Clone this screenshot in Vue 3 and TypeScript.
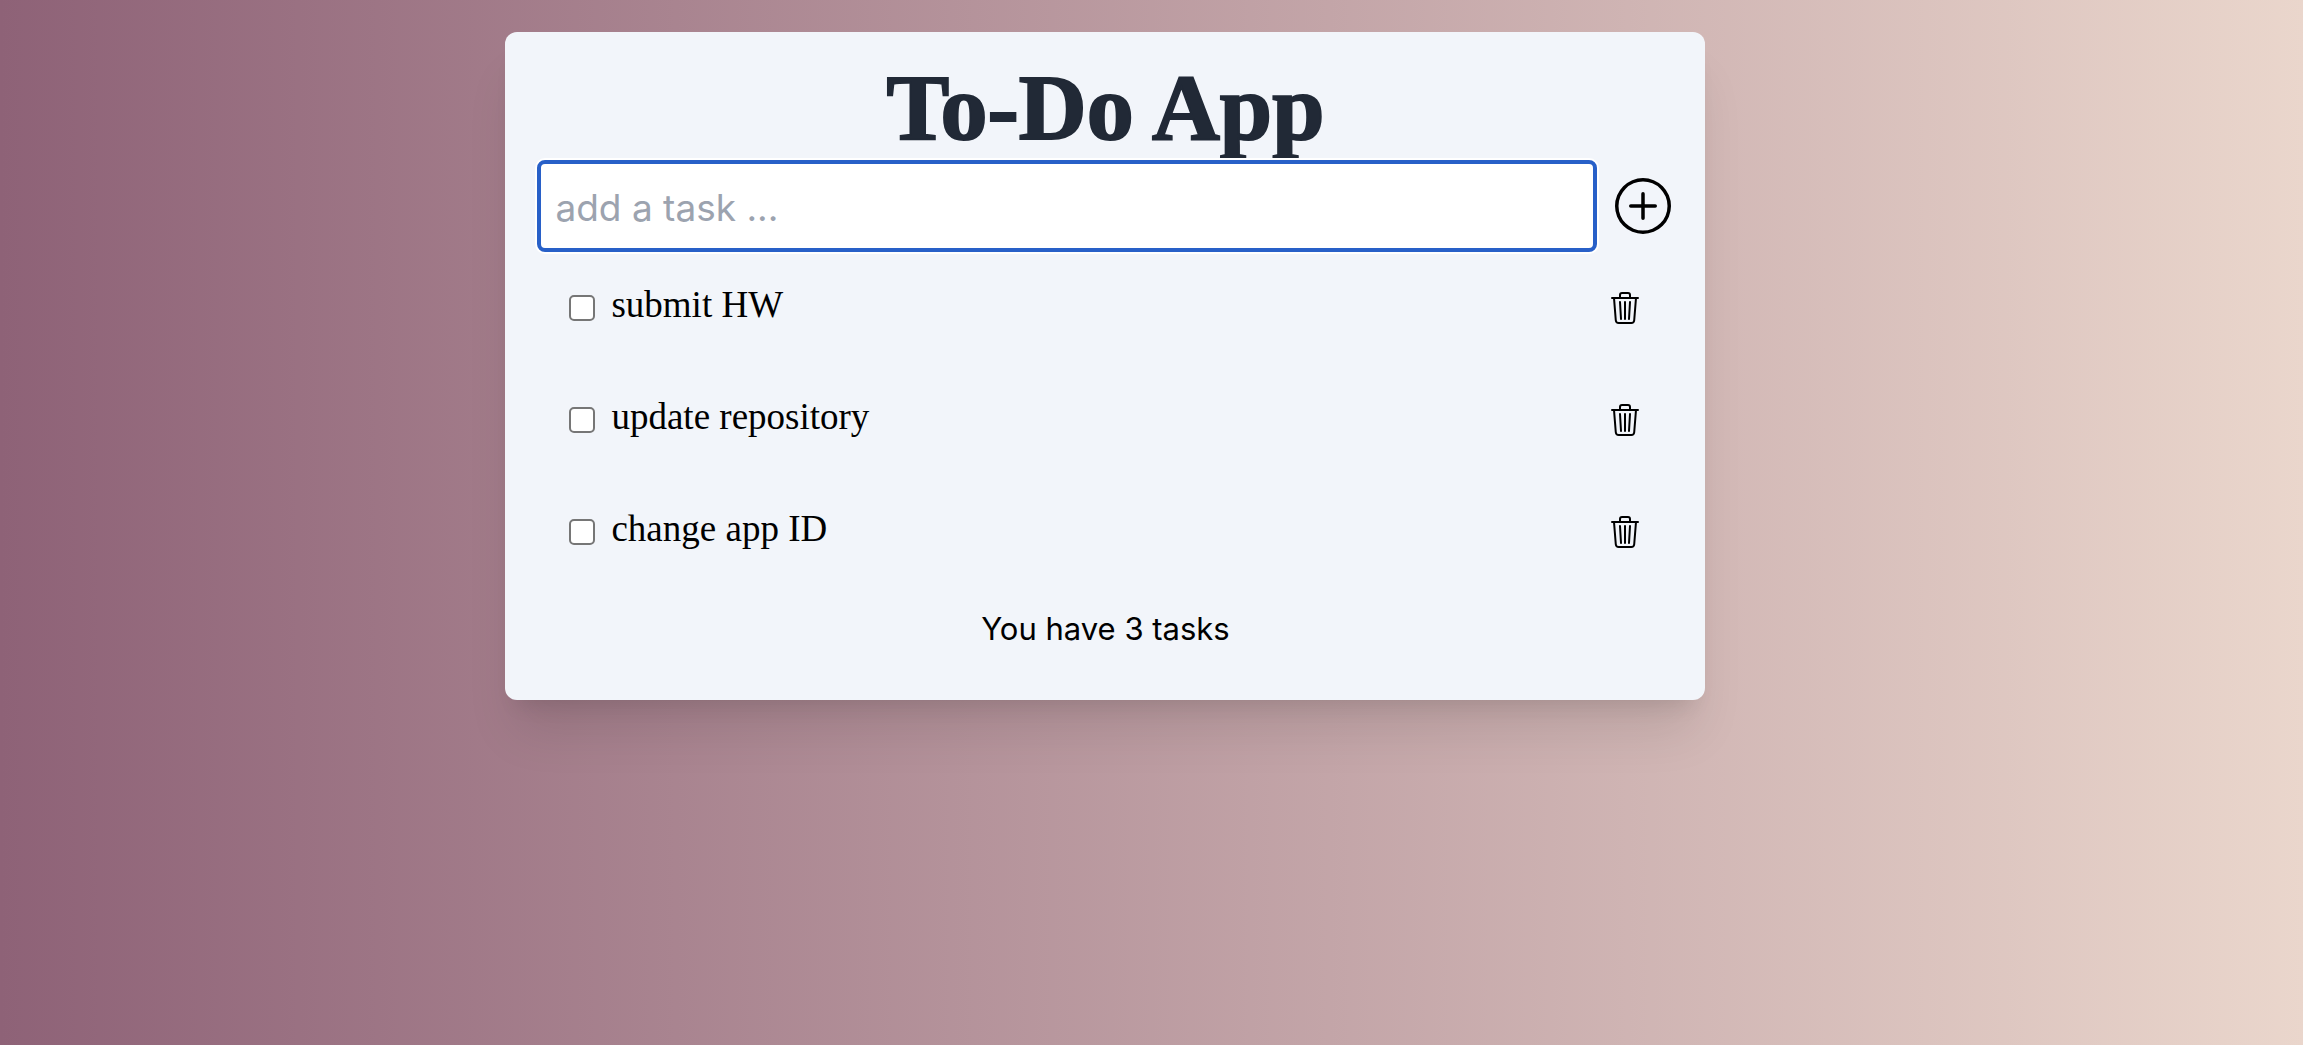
<script setup lang="ts">
import { computed, ref } from 'vue'

interface Task {
  id: number
  title: string
  done: boolean
}

const draft = ref('')
const tasks = ref<Task[]>([
  { id: 1, title: 'submit HW', done: false },
  { id: 2, title: 'update repository', done: false },
  { id: 3, title: 'change app ID', done: false },
])

const summary = computed(() => `You have ${tasks.value.length} tasks`)

function addTask() {
  const title = draft.value.trim()
  if (!title) return
  tasks.value.push({ id: Date.now(), title, done: false })
  draft.value = ''
}

function removeTask(id: number) {
  tasks.value = tasks.value.filter((task) => task.id !== id)
}
</script>

<template>
  <main class="page">
    <section class="card">
      <h1 class="title">To-Do App</h1>
      <form class="entry" @submit.prevent="addTask">
        <input v-model="draft" class="field" type="text" placeholder="add a task ..." aria-label="New task" />
        <button class="icon-button" type="submit" aria-label="Add task">
          <svg width="56" height="56" viewBox="0 0 16 16" fill="currentColor" aria-hidden="true">
            <path d="M8 15A7 7 0 1 1 8 1a7 7 0 0 1 0 14m0 1A8 8 0 1 0 8 0a8 8 0 0 0 0 16" />
            <path d="M8 4a.5.5 0 0 1 .5.5v3h3a.5.5 0 0 1 0 1h-3v3a.5.5 0 0 1-1 0v-3h-3a.5.5 0 0 1 0-1h3v-3A.5.5 0 0 1 8 4" />
          </svg>
        </button>
      </form>
      <ul class="tasks">
        <li v-for="task in tasks" :key="task.id" class="task">
          <input :id="`task-${task.id}`" v-model="task.done" class="check" type="checkbox" />
          <label class="name" :class="{ done: task.done }" :for="`task-${task.id}`">{{ task.title }}</label>
          <button class="icon-button" type="button" :aria-label="`Delete ${task.title}`" @click="removeTask(task.id)">
            <svg width="32" height="32" viewBox="0 0 16 16" fill="currentColor" aria-hidden="true">
              <path
                d="M6.5 1h3a.5.5 0 0 1 .5.5v1H6v-1a.5.5 0 0 1 .5-.5M11 2.5v-1A1.5 1.5 0 0 0 9.5 0h-3A1.5 1.5 0 0 0 5 1.5v1H1.5a.5.5 0 0 0 0 1h.538l.853 10.66A2 2 0 0 0 4.885 16h6.23a2 2 0 0 0 1.994-1.84l.853-10.66h.538a.5.5 0 0 0 0-1zm1.958 1-.846 10.58a1 1 0 0 1-.997.92h-6.23a1 1 0 0 1-.997-.92L3.042 3.5zm-7.487 1a.5.5 0 0 1 .528.47l.5 8.5a.5.5 0 0 1-.998.06L5 5.03a.5.5 0 0 1 .47-.53Zm5.058 0a.5.5 0 0 1 .47.53l-.5 8.5a.5.5 0 1 1-.998-.06l.5-8.5a.5.5 0 0 1 .528-.47M8 4.5a.5.5 0 0 1 .5.5v8.5a.5.5 0 0 1-1 0V5a.5.5 0 0 1 .5-.5"
              />
            </svg>
          </button>
        </li>
      </ul>
      <p class="summary">{{ summary }}</p>
    </section>
  </main>
</template>

<style>
body {
  margin: 0;
}
</style>

<style scoped>
.page {
  box-sizing: border-box;
  min-height: 100vh;
  padding: 32px 4% 32px 0;
  background: linear-gradient(to right, #8e6277, #ead6cc);
  font-family: Inter, "Liberation Sans", sans-serif;
  color: #000;
}

.card {
  box-sizing: border-box;
  max-width: 1200px;
  margin: 0 auto;
  padding: 32px;
  border-radius: 12px;
  background: #f2f5fa;
  box-shadow:
    0 40px 50px -10px rgb(0 0 0 / 0.1),
    0 16px 20px -12px rgb(0 0 0 / 0.1);
}

.title {
  margin: 0 0 10px;
  font-family: "Liberation Serif", serif;
  font-size: 94px;
  line-height: 86px;
  font-weight: 700;
  text-align: center;
  color: #212936;
  -webkit-text-stroke: 2px #212936;
}

.entry {
  display: flex;
  align-items: center;
  gap: 18px;
  padding-right: 2px;
}

.field {
  box-sizing: border-box;
  flex: 1;
  min-width: 0;
  height: 92px;
  padding: 2px 14px 0;
  border: 4px solid #2860c8;
  border-radius: 8px;
  outline: none;
  background: #fff;
  box-shadow: 0 0 0 2px #fff;
  font-family: inherit;
  font-size: 37px;
  color: #000;
}

.field::placeholder {
  color: #9ca3af;
  opacity: 1;
}

.icon-button {
  display: flex;
  padding: 0;
  border: 0;
  background: none;
  color: #000;
  cursor: pointer;
}

.tasks {
  margin: 0;
  padding: 0;
  list-style: none;
}

.task {
  display: flex;
  align-items: center;
  min-height: 48px;
  padding: 32px;
}

.check {
  appearance: none;
  box-sizing: border-box;
  width: 26px;
  height: 26px;
  margin: 0;
  border: 2px solid #767676;
  border-radius: 5px;
  background: #fff;
}

.check:checked {
  background: #2860c8;
}

.name {
  flex: 1;
  padding: 0 16px 6px;
  font-family: "Liberation Serif", serif;
  font-size: 37px;
  line-height: 40px;
}

.done {
  text-decoration: line-through;
}

.summary {
  margin: 0;
  padding: 17px 0 15px;
  font-size: 31px;
  line-height: 48px;
  text-align: center;
}
</style>
